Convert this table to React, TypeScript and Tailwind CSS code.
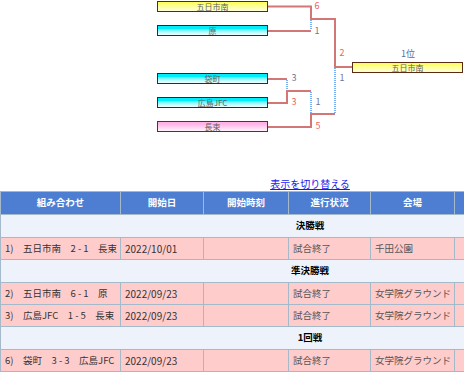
import React from 'react';

type Kind = 'yellow' | 'cyan' | 'pink';

const boxStyle: Record<Kind, string> = {
  yellow: 'border-[#5b2a12] bg-linear-to-b from-[#ffff4a] to-[#ffffd8]',
  cyan: 'border-[#1c2380] bg-linear-to-b from-[#00eefc] from-30% to-[#f4ffff]',
  pink: 'border-[#7c1e2c] bg-linear-to-b from-[#ffb2e6] from-20% to-[#fff4fb]',
};

const teams: { name: string; left: number; top: number; kind: Kind }[] = [
  { name: '五日市南', left: 157, top: 1, kind: 'yellow' },
  { name: '原', left: 157, top: 25, kind: 'cyan' },
  { name: '袋町', left: 157, top: 73, kind: 'cyan' },
  { name: '広島JFC', left: 157, top: 97, kind: 'cyan' },
  { name: '長束', left: 157, top: 121, kind: 'pink' },
  { name: '五日市南', left: 352, top: 62, kind: 'yellow' },
];

const scores: { v: string; cx: number; cy: number; win: boolean }[] = [
  { v: '6', cx: 317, cy: 6, win: true },
  { v: '1', cx: 317, cy: 31, win: false },
  { v: '2', cx: 342, cy: 53, win: true },
  { v: '1', cx: 342, cy: 78, win: false },
  { v: '3', cx: 294, cy: 78, win: false },
  { v: '3', cx: 294, cy: 102, win: true },
  { v: '1', cx: 318, cy: 102, win: false },
  { v: '5', cx: 318, cy: 126, win: true },
];

const Bracket = () => (
  <div className="relative h-[176px]">
    <svg className="absolute left-0 top-0" width="620" height="176">
      <g fill="none" stroke="#d27676" strokeWidth="2">
        <polyline points="268,6.5 311,6.5 311,19 335,19 335,67 352,67" />
        <polyline points="268,31 311,31" />
        <polyline points="268,79 287,79" />
        <polyline points="268,103 287,103 287,91 311,91" />
        <polyline points="268,127 311,127 311,114 335,114" />
      </g>
      <g fill="none" stroke="#78b2f4" strokeWidth="2" strokeDasharray="1 1">
        <line x1="311" y1="20" x2="311" y2="30" />
        <line x1="287" y1="80" x2="287" y2="90" />
        <line x1="311" y1="92" x2="311" y2="113" />
        <line x1="335" y1="68" x2="335" y2="113" />
      </g>
    </svg>

    {teams.map((t, i) => (
      <div
        key={i}
        className={`absolute flex h-[11px] w-[111px] items-center justify-center border text-[8px] leading-none text-[#606060] ${boxStyle[t.kind]}`}
        style={{ left: t.left, top: t.top }}
      >
        {t.name}
      </div>
    ))}

    {scores.map((s, i) => (
      <span
        key={i}
        className={`absolute w-[8px] text-center text-[9px] leading-[10px] ${s.win ? 'text-[#ee6262]' : 'text-[#6c7890]'}`}
        style={{ left: s.cx - 4, top: s.cy - 5 }}
      >
        {s.v}
      </span>
    ))}

    <span className="absolute left-[388px] top-[49px] w-[40px] text-center text-[9px] leading-[10px] text-[#56709a]">
      1位
    </span>
  </div>
);

const cell = 'border border-[#a4b9ca] px-1';

const Section = ({ title }: { title: string }) => (
  <tr className="h-[23px] bg-[#eef3fb]">
    <td colSpan={6} className={`${cell} text-center font-bold text-black`}>
      {title}
    </td>
  </tr>
);

const Row = ({ match, date, status, place }: { match: string; date: string; status: string; place: string }) => (
  <tr className="h-[22px] bg-[#ffcccc]">
    <td className={`${cell} whitespace-nowrap text-[#333]`}>{match}</td>
    <td className={`${cell} text-[10px] text-[#333]`}>{date}</td>
    <td className={cell}></td>
    <td className={`${cell} text-[#555]`}>{status}</td>
    <td className={`${cell} whitespace-nowrap text-[#555]`}>{place}</td>
    <td className={cell}></td>
  </tr>
);

export default function App() {
  return (
    <div className="w-[464px] overflow-hidden bg-white font-['Noto_Sans_CJK_JP',sans-serif]">
      <div className="w-[620px]">
        <Bracket />

        <div className="h-[15px] text-center text-[10px] leading-[15px]">
          <a href="#" className="text-[#1a1aee] underline">
            表示を切り替える
          </a>
        </div>

        <table className="w-[620px] table-fixed text-[9.5px] leading-none">
          <colgroup>
            <col className="w-[120px]" />
            <col className="w-[83px]" />
            <col className="w-[85px]" />
            <col className="w-[82px]" />
            <col className="w-[84px]" />
            <col />
          </colgroup>
          <thead>
            <tr className="h-[23px] bg-[#4e7ed1] text-white">
              <th className={`${cell} font-bold`}>組み合わせ</th>
              <th className={`${cell} font-bold`}>開始日</th>
              <th className={`${cell} font-bold`}>開始時刻</th>
              <th className={`${cell} font-bold`}>進行状況</th>
              <th className={`${cell} font-bold`}>会場</th>
              <th className={cell}></th>
            </tr>
          </thead>
          <tbody>
            <Section title="決勝戦" />
            <Row match="1)　五日市南　2 - 1　長束" date="2022/10/01" status="試合終了" place="千田公園" />
            <Section title="準決勝戦" />
            <Row match="2)　五日市南　6 - 1　原" date="2022/09/23" status="試合終了" place="女学院グラウンド" />
            <Row match="3)　広島JFC　1 - 5　長束" date="2022/09/23" status="試合終了" place="女学院グラウンド" />
            <Section title="1回戦" />
            <Row match="6)　袋町　3 - 3　広島JFC" date="2022/09/23" status="試合終了" place="女学院グラウンド" />
          </tbody>
        </table>
      </div>
    </div>
  );
}
